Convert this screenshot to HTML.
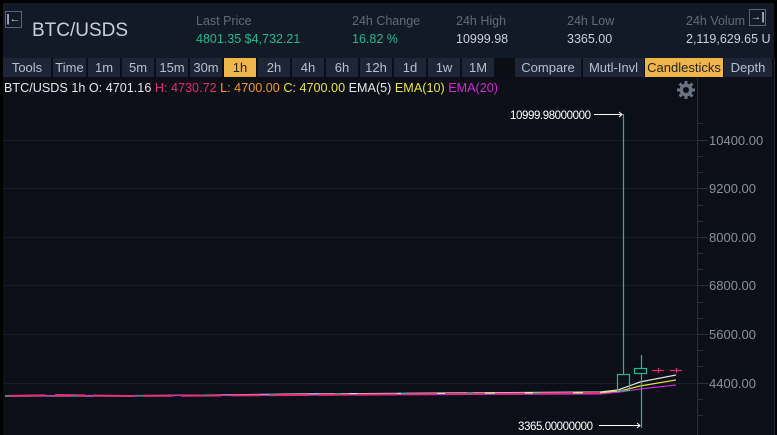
<!DOCTYPE html>
<html><head><meta charset="utf-8"><style>
*{margin:0;padding:0;box-sizing:border-box}
body{width:777px;height:435px;background:#000;overflow:hidden;font-family:"Liberation Sans",sans-serif;position:relative}
.hdr{position:absolute;left:3px;top:3px;width:771px;height:55px;background:#131a27}
.t{position:absolute;font-size:13px;white-space:nowrap}
.lbl{color:#5f6b7a}
.g{color:#24b98a}
.w{color:#c9d0da}
.bar{position:absolute;left:3px;top:58px;width:771px;height:20px;background:#0b0e15}
.b{position:absolute;top:58px;height:19px;background:#1e2536;color:#b8c0cc;font-size:13px;line-height:19px;text-align:center}
.b.on{background:#f0b548;color:#222}
.chart{position:absolute;left:3px;top:78px;width:772px;height:357px;background:#0c0f17}
</style></head><body>
<div class="hdr"></div>
<div style="position:absolute;left:5px;top:11px;width:17px;height:17px;border:1px solid #5a6475;color:#c9d0da;font-size:11px;line-height:14px;text-align:center;font-weight:bold">|←</div>
<div class="t w" style="left:32px;top:20px;font-size:19px">BTC/USDS</div>
<div class="t lbl" style="left:196px;top:14px;font-size:12.5px">Last Price</div>
<div class="t g" style="left:196px;top:32px;font-size:12.5px">4801.35 $4,732.21</div>
<div class="t lbl" style="left:352px;top:14px;font-size:12.5px">24h Change</div>
<div class="t g" style="left:352px;top:32px;font-size:12.5px">16.82 %</div>
<div class="t lbl" style="left:456px;top:14px;font-size:12.5px">24h High</div>
<div class="t w" style="left:456px;top:32px;font-size:12.5px">10999.98</div>
<div class="t lbl" style="left:567px;top:14px;font-size:12.5px">24h Low</div>
<div class="t w" style="left:567px;top:32px;font-size:12.5px">3365.00</div>
<div class="t lbl" style="left:686px;top:14px;font-size:12.5px">24h Volum</div>
<div class="t w" style="left:686px;top:32px;font-size:12.5px">2,119,629.65 U</div>
<div style="position:absolute;left:749px;top:9px;width:17px;height:17px;border:1px solid #5a6475;color:#c9d0da;font-size:11px;line-height:14px;text-align:center;font-weight:bold;background:#131a27">→|</div>
<div class="bar"></div>
<div class="b" style="left:3px;width:48px">Tools</div>
<div class="b" style="left:53px;width:33px">Time</div>
<div class="b" style="left:88px;width:32px">1m</div>
<div class="b" style="left:122px;width:32px">5m</div>
<div class="b" style="left:156px;width:32px">15m</div>
<div class="b" style="left:190px;width:32px">30m</div>
<div class="b on" style="left:224px;width:32px">1h</div>
<div class="b" style="left:258px;width:32px">2h</div>
<div class="b" style="left:292px;width:32px">4h</div>
<div class="b" style="left:326px;width:32px">6h</div>
<div class="b" style="left:360px;width:32px">12h</div>
<div class="b" style="left:394px;width:32px">1d</div>
<div class="b" style="left:428px;width:32px">1w</div>
<div class="b" style="left:462px;width:32px">1M</div>
<div class="b" style="left:515px;width:66px">Compare</div>
<div class="b" style="left:583px;width:61px">Mutl-Invl</div>
<div class="b on" style="left:645px;width:78px">Candlesticks</div>
<div class="b" style="left:724px;width:48px">Depth</div>
<div class="chart"></div>
<svg style="position:absolute;left:0;top:0" width="777" height="435" font-family="Liberation Sans,sans-serif">
<g stroke="#181c26" stroke-width="1">
<line x1="3" y1="140.5" x2="697" y2="140.5"/><line x1="3" y1="188.5" x2="697" y2="188.5"/><line x1="3" y1="237.5" x2="697" y2="237.5"/><line x1="3" y1="285.5" x2="697" y2="285.5"/><line x1="3" y1="334.5" x2="697" y2="334.5"/><line x1="3" y1="383.5" x2="697" y2="383.5"/>
</g>
<line x1="697.5" y1="78" x2="697.5" y2="435" stroke="#2a3040"/>
<g stroke="#2a3040"><line x1="697" y1="123.5" x2="703" y2="123.5"/><line x1="697" y1="156.5" x2="703" y2="156.5"/><line x1="697" y1="172.5" x2="703" y2="172.5"/><line x1="697" y1="205.5" x2="703" y2="205.5"/><line x1="697" y1="221.5" x2="703" y2="221.5"/><line x1="697" y1="253.5" x2="703" y2="253.5"/><line x1="697" y1="269.5" x2="703" y2="269.5"/><line x1="697" y1="302.5" x2="703" y2="302.5"/><line x1="697" y1="318.5" x2="703" y2="318.5"/><line x1="697" y1="350.5" x2="703" y2="350.5"/><line x1="697" y1="366.5" x2="703" y2="366.5"/><line x1="697" y1="399.5" x2="703" y2="399.5"/><line x1="697" y1="415.5" x2="703" y2="415.5"/>
<line x1="697" y1="140.5" x2="708" y2="140.5"/><line x1="697" y1="188.5" x2="708" y2="188.5"/><line x1="697" y1="237.5" x2="708" y2="237.5"/><line x1="697" y1="285.5" x2="708" y2="285.5"/><line x1="697" y1="334.5" x2="708" y2="334.5"/><line x1="697" y1="383.5" x2="708" y2="383.5"/></g>
<g fill="#8a919c" font-size="13"><text x="709" y="145">10400.00</text><text x="709" y="193">9200.00</text><text x="709" y="242">8000.00</text><text x="709" y="290">6800.00</text><text x="709" y="339">5600.00</text><text x="709" y="388">4400.00</text></g>
<line x1="774.5" y1="58" x2="774.5" y2="435" stroke="#222834"/>
<text x="4" y="92" font-size="12.6" fill="#e6e6e6" textLength="494" lengthAdjust="spacing">BTC/USDS 1h  O: 4701.16 <tspan fill="#e0306e">H: 4730.72</tspan> <tspan fill="#f59a23">L: 4700.00</tspan> <tspan fill="#e9e23a">C: 4700.00</tspan> EMA(5) <tspan fill="#e9e23a">EMA(10)</tspan> <tspan fill="#d22ad2">EMA(20)</tspan></text>
<g transform="translate(686,90)" fill="#6b7280"><circle r="6.5"/><g stroke="#6b7280" stroke-width="3"><line x1="0" y1="-9" x2="0" y2="9"/><line x1="-9" y1="0" x2="9" y2="0"/><line x1="-6.4" y1="-6.4" x2="6.4" y2="6.4"/><line x1="-6.4" y1="6.4" x2="6.4" y2="-6.4"/></g><circle r="3" fill="#0c0f17"/></g>
<polyline points="5,396 120,396 300,394 450,393 600,392 618,390 640,382 676,375" fill="none" stroke="#e0e0e0" stroke-width="1.2"/>
<polyline points="5,396 300,395 600,393 620,391 640,386 676,380" fill="none" stroke="#e9e23a" stroke-width="1.2"/>
<polyline points="5,396 300,395 600,394 620,392 640,389 676,385" fill="none" stroke="#c22ad2" stroke-width="1.2"/>
<polyline points="5,396 60,395 130,396 300,395 450,394 600,393" fill="none" stroke="#e0307a" stroke-width="2" stroke-dasharray="40 10 30 8"/>
<polyline points="5,396 120,396 300,394 450,393 600,393" fill="none" stroke="#20a080" stroke-width="1" stroke-dasharray="6 60"/>
<g stroke="#24b98a" stroke-width="1.2" fill="none">
<line x1="623.5" y1="114" x2="623.5" y2="374"/><line x1="623.5" y1="390" x2="623.5" y2="392"/><rect x="617.5" y="374.5" width="12" height="16"/>
<line x1="641.5" y1="355" x2="641.5" y2="368"/><line x1="641.5" y1="374" x2="641.5" y2="428"/><rect x="634.5" y="368.5" width="12" height="5"/>
</g>
<g stroke="#e0306e" stroke-width="1.2"><line x1="652" y1="370.5" x2="664" y2="370.5"/><line x1="658.5" y1="368" x2="658.5" y2="373"/><line x1="670" y1="370.5" x2="682" y2="370.5"/><line x1="676.5" y1="368" x2="676.5" y2="373"/></g>
<g stroke="#fff" stroke-width="1" fill="none"><line x1="594" y1="114.5" x2="622" y2="114.5"/><polyline points="619,112 622,114.5 619,117"/><line x1="599" y1="425.5" x2="640" y2="425.5"/><polyline points="637,423 640,425.5 637,428"/></g>
<g fill="#fff" font-size="11.5"><text x="510" y="119" textLength="81">10999.98000000</text><text x="518" y="430" textLength="75">3365.00000000</text></g>
</svg>
</body></html>
